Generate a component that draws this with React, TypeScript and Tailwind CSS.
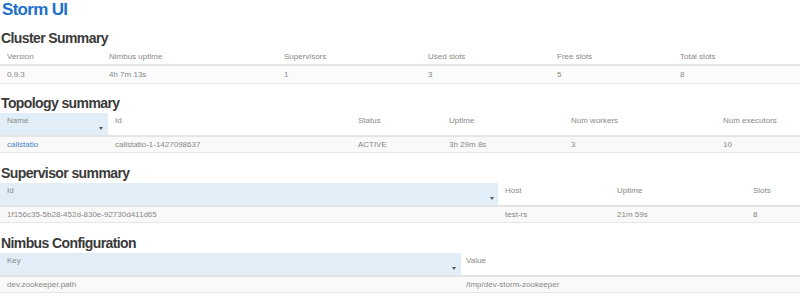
import React from "react";

const Arrow = ({ right }: { right: string }) => (
  <span
    className={`absolute bottom-[5px] ${right} w-0 h-0 border-l-[2.5px] border-r-[2.5px] border-t-[3px] border-l-transparent border-r-transparent border-t-[#555]`}
  />
);

function Heading({ children, mt }: { children: React.ReactNode; mt: string }) {
  return (
    <div className={`${mt} h-[16px] pl-[1px] text-[14px] leading-[16px] font-bold text-[#3a3a3a] tracking-[-0.6px]`}>
      {children}
    </div>
  );
}

export default function App() {
  return (
    <div className="w-[800px] h-[298px] overflow-hidden bg-white font-['Liberation_Sans',Arial,sans-serif]">
      <div className="h-[20px] pl-[2px] text-[17px] leading-[20px] font-bold text-[#216fcc] tracking-[-0.7px]">
        Storm UI
      </div>

      <Heading mt="mt-[10px]">Cluster Summary</Heading>
      <div className="mt-[2px] text-[8px] leading-[10px] text-[#888]">
        <div className="grid grid-cols-[102px_175px_144px_129px_123px_1fr] border-b-2 border-[#e4e4e4]">
          {["Version", "Nimbus uptime", "Supervisors", "Used slots", "Free slots", "Total slots"].map((t) => (
            <div key={t} className="pl-[7px] pt-[4px] pb-[2px]">{t}</div>
          ))}
        </div>
        <div className="grid grid-cols-[102px_175px_144px_129px_123px_1fr] bg-[#fbfbfb] border-b border-[#e6e6e6]">
          {["0.9.3", "4h 7m 13s", "1", "3", "5", "8"].map((t, i) => (
            <div key={i} className="pl-[7px] pt-[4px] pb-[3px]">{t}</div>
          ))}
        </div>
      </div>

      <Heading mt="mt-[11px]">Topology summary</Heading>
      <div className="mt-[2px] text-[8px] leading-[10px] text-[#888]">
        <div className="grid grid-cols-[108px_243px_91px_122px_152px_1fr] h-[24px] border-b-2 border-[#e4e4e4]">
          <div className="relative pl-[7px] pt-[3px] bg-[#e1eef7]">
            Name
            <Arrow right="right-[5px]" />
          </div>
          {["Id", "Status", "Uptime", "Num workers", "Num executors"].map((t) => (
            <div key={t} className="pl-[7px] pt-[3px]">{t}</div>
          ))}
        </div>
        <div className="grid grid-cols-[108px_243px_91px_122px_152px_1fr] bg-[#f9f9f9] border-b border-[#e6e6e6]">
          <div className="pl-[7px] pt-[3px] pb-[2px] text-[#4a80c6]">callstatio</div>
          {["callstatio-1-1427098637", "ACTIVE", "3h 29m 8s", "3", "10"].map((t, i) => (
            <div key={i} className="pl-[7px] pt-[3px] pb-[2px]">{t}</div>
          ))}
        </div>
      </div>

      <Heading mt="mt-[12px]">Supervisor summary</Heading>
      <div className="mt-[2px] text-[8px] leading-[10px] text-[#888]">
        <div className="grid grid-cols-[498px_112px_136px_1fr] h-[24px] border-b-2 border-[#e4e4e4]">
          <div className="relative pl-[7px] pt-[3px] bg-[#e1eef7]">
            Id
            <Arrow right="right-[4px]" />
          </div>
          {["Host", "Uptime", "Slots"].map((t) => (
            <div key={t} className="pl-[7px] pt-[3px]">{t}</div>
          ))}
        </div>
        <div className="grid grid-cols-[498px_112px_136px_1fr] bg-[#f9f9f9] border-b border-[#e6e6e6]">
          {["1f156c35-5b28-452d-830e-92730d411d65", "test-rs", "21m 59s", "8"].map((t, i) => (
            <div key={i} className="pl-[7px] pt-[3px] pb-[2px]">{t}</div>
          ))}
        </div>
      </div>

      <Heading mt="mt-[12px]">Nimbus Configuration</Heading>
      <div className="mt-[2px] text-[8px] leading-[10px] text-[#888]">
        <div className="grid grid-cols-[461px_1fr] h-[24px] border-b-2 border-[#e4e4e4]">
          <div className="relative pl-[7px] pt-[3px] bg-[#e1eef7]">
            Key
            <Arrow right="right-[5px]" />
          </div>
          <div className="pl-[5px] pt-[3px]">Value</div>
        </div>
        <div className="grid grid-cols-[461px_1fr] bg-[#f9f9f9] border-b border-[#e6e6e6]">
          <div className="pl-[7px] pt-[3px] pb-[2px]">dev.zookeeper.path</div>
          <div className="pl-[5px] pt-[3px] pb-[2px]">/tmp/dev-storm-zookeeper</div>
        </div>
      </div>
    </div>
  );
}
